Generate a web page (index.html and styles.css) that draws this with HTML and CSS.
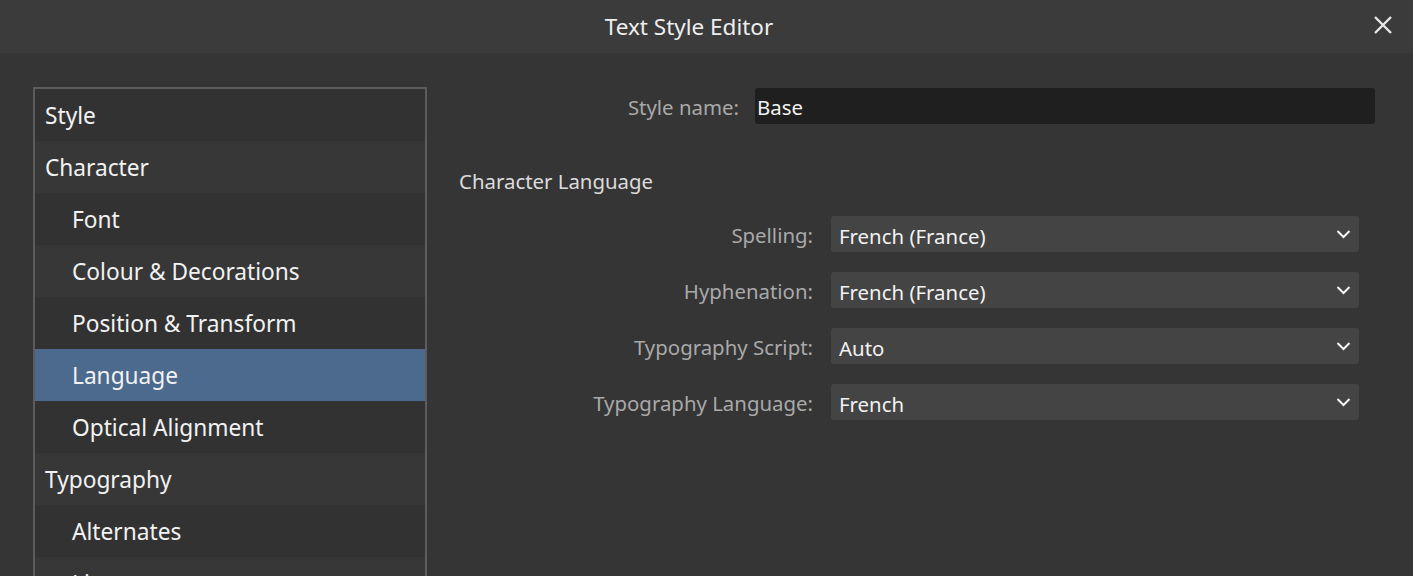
FILE: index.html
```html
<!DOCTYPE html>
<html>
<head>
<meta charset="utf-8">
<link rel="stylesheet" href="styles.css">
</head>
<body>
<div class="dialog">
  <header class="titlebar">
    <div class="title">Text Style Editor</div>
    <svg class="close" width="20" height="20" viewBox="0 0 20 20"><path d="M2 2 L18 18 M18 2 L2 18" stroke="#e8e8e8" stroke-width="2.4" fill="none"/></svg>
  </header>
  <main class="content">
    <nav class="list">
      <div class="item top r1">Style</div>
      <div class="item top r2">Character</div>
      <div class="item sub r1">Font</div>
      <div class="item sub r2">Colour &amp; Decorations</div>
      <div class="item sub r1">Position &amp; Transform</div>
      <div class="item sub selected">Language</div>
      <div class="item sub r1">Optical Alignment</div>
      <div class="item top r2">Typography</div>
      <div class="item sub r1">Alternates</div>
      <div class="item sub r2">Ligatures</div>
    </nav>
    <section class="pane">
      <div class="namerow">
        <label class="lbl">Style name:</label>
        <div class="input">Base</div>
      </div>
      <h2 class="heading">Character Language</h2>
      <div class="fields">
        <label class="lbl">Spelling:</label>
        <div class="select"><span>French (France)</span><svg class="chev" width="15" height="10" viewBox="0 0 15 10"><path d="M1.5 2 L7.5 8 L13.5 2" stroke="#f4f4f4" stroke-width="2" fill="none"/></svg></div>
        <label class="lbl">Hyphenation:</label>
        <div class="select"><span>French (France)</span><svg class="chev" width="15" height="10" viewBox="0 0 15 10"><path d="M1.5 2 L7.5 8 L13.5 2" stroke="#f4f4f4" stroke-width="2" fill="none"/></svg></div>
        <label class="lbl">Typography Script:</label>
        <div class="select"><span>Auto</span><svg class="chev" width="15" height="10" viewBox="0 0 15 10"><path d="M1.5 2 L7.5 8 L13.5 2" stroke="#f4f4f4" stroke-width="2" fill="none"/></svg></div>
        <label class="lbl">Typography Language:</label>
        <div class="select"><span>French</span><svg class="chev" width="15" height="10" viewBox="0 0 15 10"><path d="M1.5 2 L7.5 8 L13.5 2" stroke="#f4f4f4" stroke-width="2" fill="none"/></svg></div>
      </div>
    </section>
  </main>
</div>
</body>
</html>
```
FILE: styles.css
```css
html, body {
  margin: 0;
  padding: 0;
  background: #353535;
  height: 100%;
  overflow: hidden;
}
.dialog {
  font-family: "Noto Sans", "Open Sans", sans-serif;
  color: #f0f0f0;
}
.titlebar {
  height: 53px;
  background: #3b3b3b;
  display: flex;
  align-items: center;
  justify-content: center;
  position: relative;
}
.title {
  font-size: 22.5px;
  color: #eeeeee;
  padding-right: 35px;
}
.close {
  position: absolute;
  right: 20px;
  top: 15px;
}
.content {
  display: flex;
  padding-top: 34px;
  padding-left: 33px;
}
.list {
  width: 390px;
  border: 2px solid #5c5c5c;
  border-bottom: none;
  flex: none;
  height: 600px;
  background: #333333;
}
.item {
  height: 52px;
  display: flex;
  align-items: center;
  font-size: 22.7px;
  color: #f2f2f2;
  box-sizing: border-box;
  padding-top: 1px;
}
.item.top { padding-left: 10px; }
.item.sub { padding-left: 37px; }
.item.r1 { background: #323232; }
.item.r2 { background: #373737; }
.item.selected { background: #4b6a8e; }
.pane {
  padding-left: 32px;
  flex: 1;
}
.namerow {
  display: grid;
  grid-template-columns: 280px 620px;
  column-gap: 16px;
  align-items: center;
  height: 36px;
  margin-top: 1px;
}
.lbl {
  text-align: right;
  font-size: 20.4px;
  color: #a9a9a9;
  padding-top: 2px;
}
.input {
  height: 36px;
  background: #1f1f1f;
  border-radius: 3px;
  display: flex;
  align-items: center;
  padding-left: 2px;
  font-size: 20.4px;
  color: #f2f2f2;
  padding-top: 2px;
  box-sizing: border-box;
}
.heading {
  margin: 0;
  font-weight: normal;
  font-size: 20.4px;
  color: #dcdcdc;
  height: 28px;
  margin-top: 43px;
  line-height: 28px;
}
.fields {
  display: grid;
  grid-template-columns: 354px 528px;
  column-gap: 18px;
  row-gap: 20px;
  align-items: center;
  margin-top: 21px;
}
.select {
  height: 36px;
  background: #444444;
  border-radius: 3px;
  display: flex;
  align-items: center;
  justify-content: space-between;
  padding: 3px 8px 0 8px;
  box-sizing: border-box;
  font-size: 20.4px;
  color: #f2f2f2;
}
.chev { margin-top: -3px; }
```
